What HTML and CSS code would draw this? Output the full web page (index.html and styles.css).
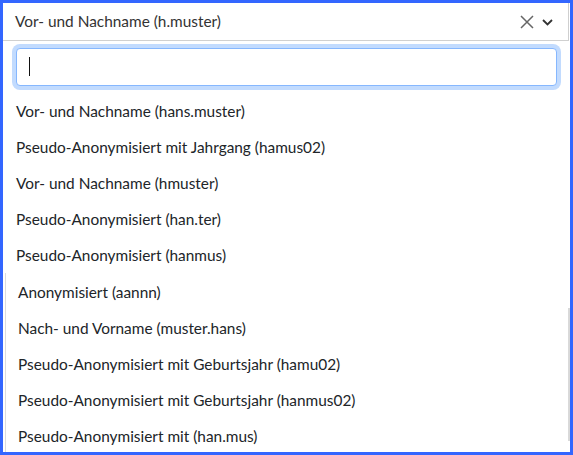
FILE: index.html
```html
<!DOCTYPE html>
<html lang="de">
<head>
<meta charset="utf-8">
<title>Benutzername wählen</title>
<link rel="stylesheet" href="styles.css">
</head>
<body>
<div class="frame">
  <div class="control">
    <span class="control-value">Vor- und Nachname (h.muster)</span>
    <span class="control-icons">
      <svg class="icon-clear" width="14" height="14" viewBox="0 0 14 14" aria-hidden="true">
        <path d="M1 1 L13 13 M13 1 L1 13" stroke="#666" stroke-width="1.5" fill="none"/>
      </svg>
      <svg class="icon-caret" width="11" height="7" viewBox="0 0 11 7" aria-hidden="true">
        <path d="M1 1 L5.5 5.5 L10 1" stroke="#333" stroke-width="1.8" fill="none"/>
      </svg>
    </span>
  </div>
  <div class="search-wrap">
    <div class="search-box">
      <input class="search" type="text">
      <span class="text-caret"></span>
    </div>
  </div>
  <ul class="options">
    <li>Vor- und Nachname (hans.muster)</li>
    <li>Pseudo-Anonymisiert mit Jahrgang (hamus02)</li>
    <li>Vor- und Nachname (hmuster)</li>
    <li>Pseudo-Anonymisiert (han.ter)</li>
    <li>Pseudo-Anonymisiert (hanmus)</li>
  </ul>
  <div class="more">
    <ul class="options options-more">
      <li>Anonymisiert (aannn)</li>
      <li>Nach- und Vorname (muster.hans)</li>
      <li>Pseudo-Anonymisiert mit Geburtsjahr (hamu02)</li>
      <li>Pseudo-Anonymisiert mit Geburtsjahr (hanmus02)</li>
      <li>Pseudo-Anonymisiert mit (han.mus)</li>
    </ul>
    <div class="scroll-thumb"></div>
  </div>
</div>
</body>
</html>
```

FILE: styles.css
```css
* { box-sizing: border-box; }

html, body {
  margin: 0;
  padding: 0;
  background: #fff;
}

body {
  font-family: "Lato", "Noto Sans", sans-serif;
  font-size: 15.4px;
  color: #212529;
}

.frame {
  width: 573px;
  height: 455px;
  border: 3px solid #3366ff;
  overflow: hidden;
  background: #fff;
}

.control {
  height: 38px;
  margin-right: 1px;
  border-right: 1px solid #cfcfcf;
  border-bottom: 1px solid #d0d0d0;
  display: flex;
  align-items: center;
  padding: 0 12px 0 12px;
  color: #333;
}

.control-value {
  flex: 1;
  padding-bottom: 1px;
}

.control-icons {
  display: flex;
  align-items: center;
  gap: 8px;
  margin-right: 3px;
}

.icon-clear { display: block; }
.icon-caret { display: block; margin-top: 1px; }

.search-wrap {
  padding: 7px 13px 0 13px;
}

.search-box {
  position: relative;
}

.search {
  display: block;
  width: 100%;
  height: 38px;
  border: 1px solid #86b7fe;
  border-radius: 4px;
  box-shadow: 0 0 0 4px #c2dbfe;
  outline: none;
  padding: 0 12px;
  font: inherit;
  color: #212529;
  caret-color: transparent;
}

/* focused text cursor */
.text-caret {
  position: absolute;
  left: 13px;
  top: 9px;
  width: 1px;
  height: 19px;
  background: #111;
}

.options {
  list-style: none;
  margin: 7px 0 0 0;
  padding: 0 0 0 13px;
}

.options li {
  height: 36px;
  line-height: 36px;
  white-space: nowrap;
}

.more {
  position: relative;
  margin-left: 2px;
  border-left: 1px solid #dcdcdc;
  height: 180px;
}

.options-more {
  margin: 0;
  padding: 1px 0 0 12px;
}

.scroll-thumb {
  position: absolute;
  right: 0;
  top: 35px;
  width: 2px;
  height: 133px;
  background: #d9d9d9;
}
```
